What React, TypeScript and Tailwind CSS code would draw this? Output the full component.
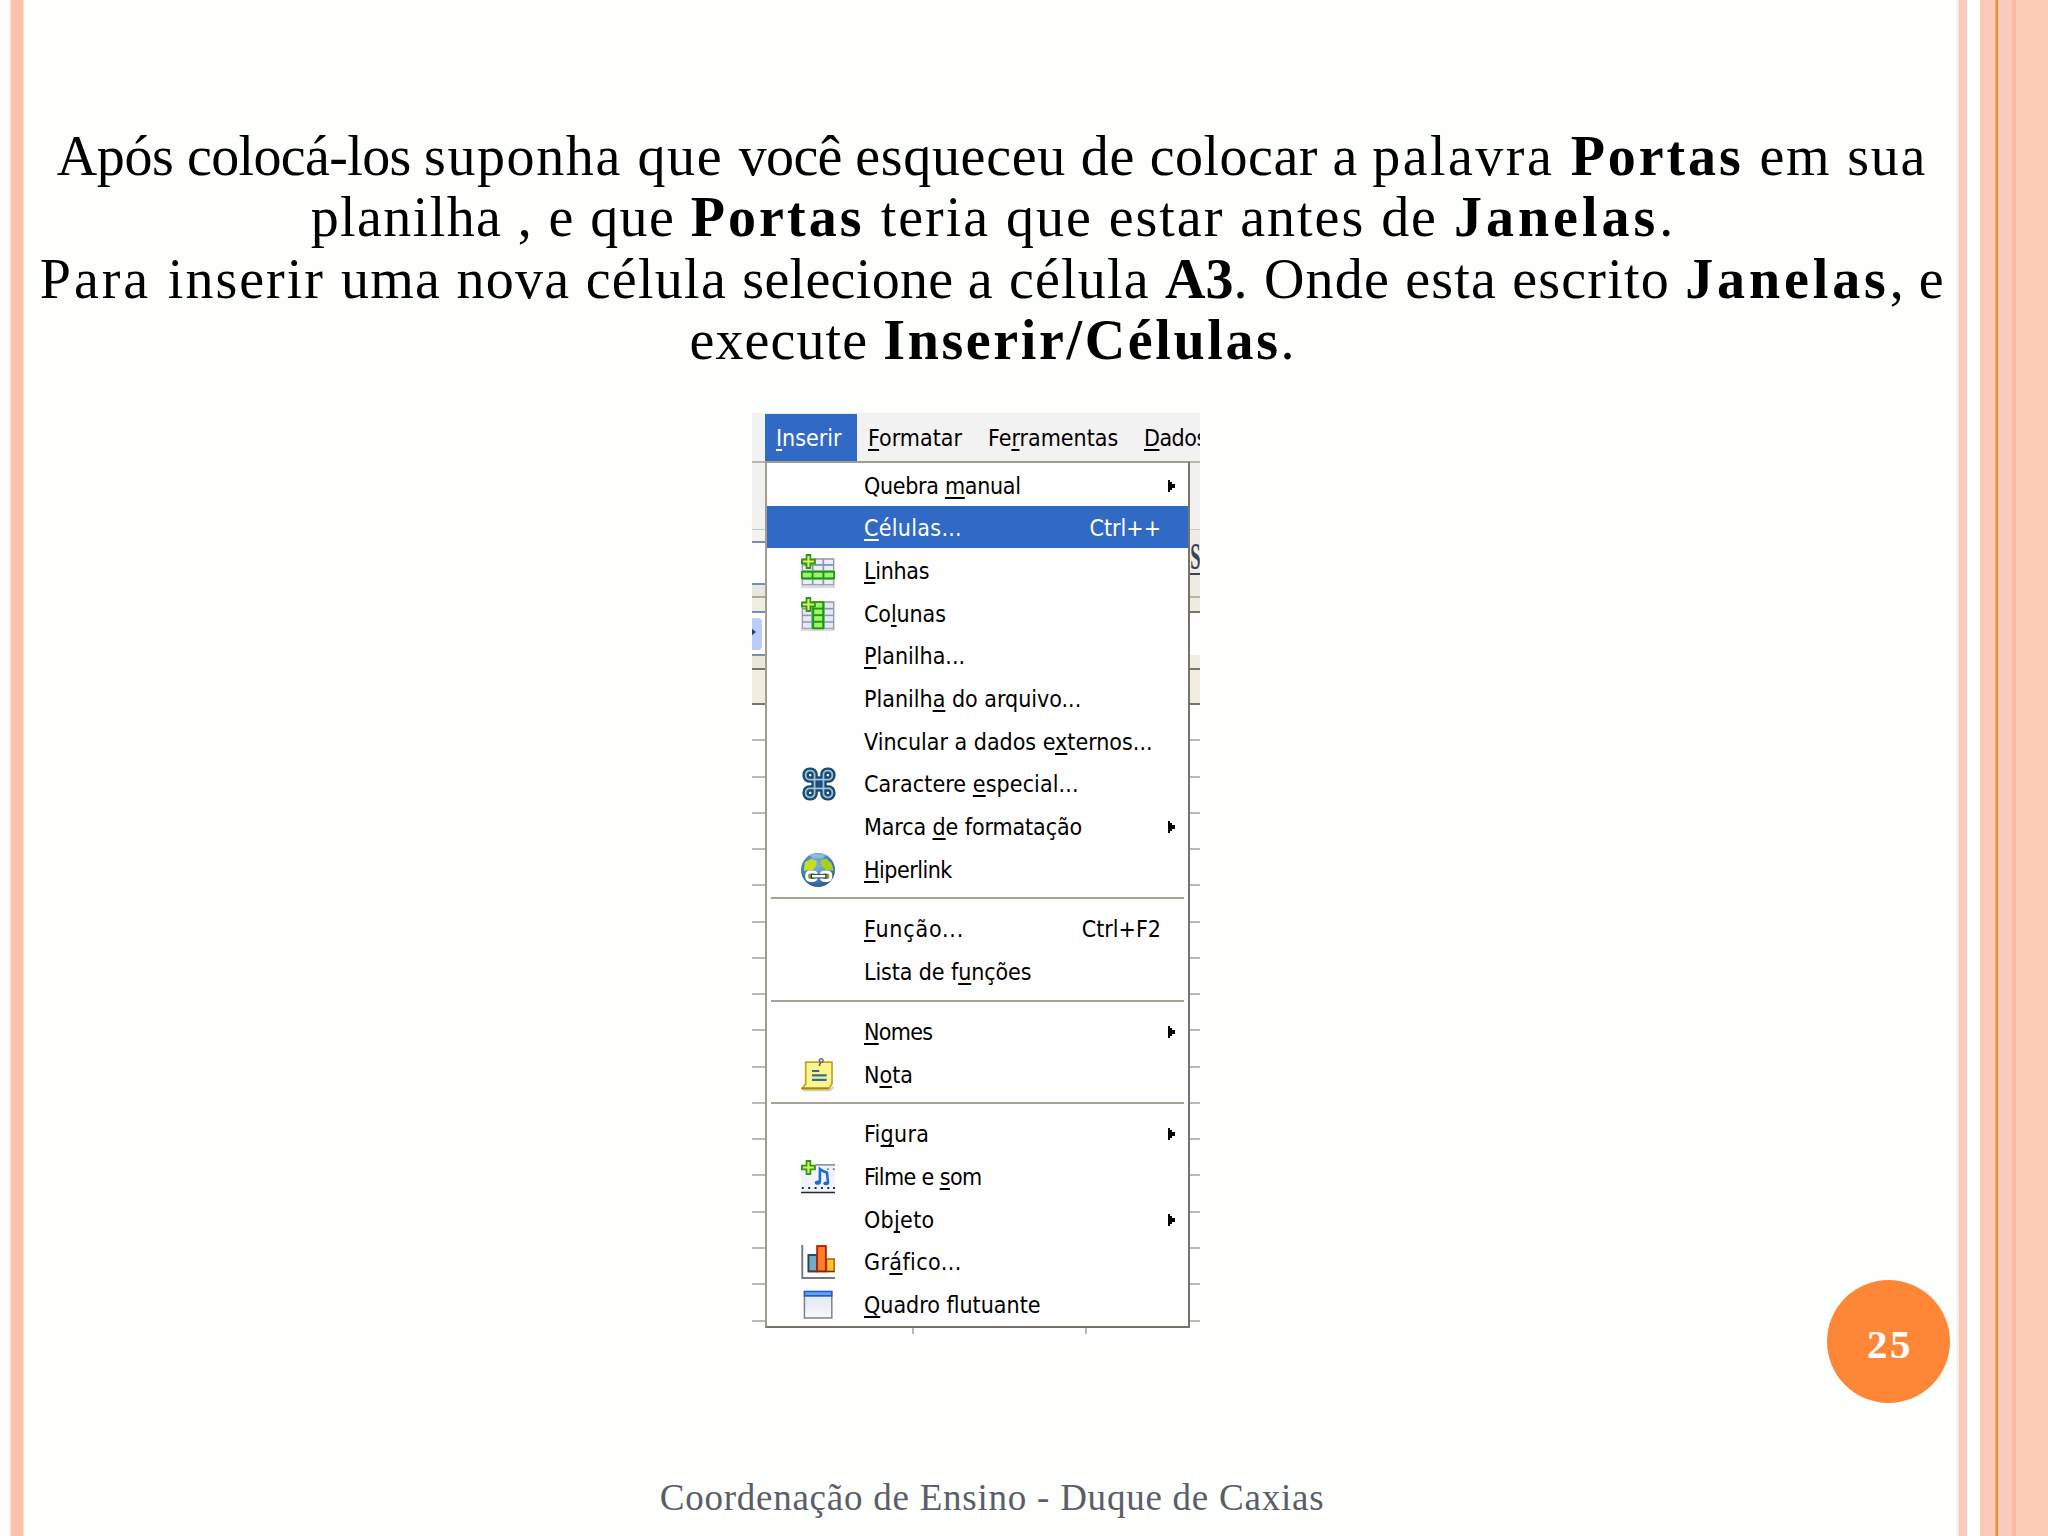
import { ReactNode } from "react";

// "&" marks the mnemonic letter of a label
function Label({ text }: { text: string }) {
  const at = text.indexOf("&");
  if (at < 0) return <>{text}</>;
  return (
    <>
      {text.slice(0, at)}
      <span className="underline decoration-2 underline-offset-[3px] [text-decoration-skip-ink:none]">
        {text[at + 1]}
      </span>
      {text.slice(at + 2)}
    </>
  );
}

function Icon({ children }: { children: ReactNode }) {
  return (
    <svg viewBox="0 0 16 16" className="block h-[34px] w-[34px]">
      {children}
    </svg>
  );
}

function GreenPlus() {
  return (
    <>
      <path
        d="M2.2 0h2.6v2.2H7v2.6H4.8V7H2.2V4.8H0V2.2h2.2z"
        fill="#2f9a10"
      />
      <path d="M3 .9h1v2.1h2.1v1H4v2.1H3V4H.9V3H3z" fill="#d6f06a" />
    </>
  );
}

function RowsIcon() {
  return (
    <Icon>
      <rect x="0" y="15" width="16" height="1" fill="#d9dbe0" />
      <rect x="0.3" y="2" width="15.4" height="12.8" fill="#8f96a8" />
      {[2.7, 5.6, 12.2].map((y) =>
        [0.9, 5.9, 10.9].map((x) => (
          <rect key={`${x}-${y}`} x={x} y={y} width="4.2" height="2" fill="#e9eefa" />
        ))
      )}
      <rect x="0" y="8" width="16" height="3.8" fill="#12a006" />
      {[0.8, 5.9, 11].map((x) => (
        <rect key={x} x={x} y="8.8" width="4.2" height="2.2" fill="#a5f06c" />
      ))}
      <GreenPlus />
    </Icon>
  );
}

function ColumnsIcon() {
  return (
    <Icon>
      <rect x="0" y="15" width="16" height="1" fill="#d9dbe0" />
      <rect x="0.3" y="2" width="15.4" height="13" fill="#8f96a8" />
      {[2.7, 5.9, 9, 12.1].map((y) =>
        [0.9, 11.2].map((x) => (
          <rect key={`${x}-${y}`} x={x} y={y} width="3.9" height="2.4" fill="#e3e9f6" />
        ))
      )}
      <rect x="5.3" y="2" width="5.6" height="13.2" fill="#12a006" />
      {[2.8, 5.9, 9, 12.1].map((y) => (
        <rect key={y} x="6.2" y={y} width="3.8" height="2.2" fill="#a5f06c" />
      ))}
      <GreenPlus />
    </Icon>
  );
}

function SpecialCharIcon() {
  const loops =
    "M9 9H5.5A2.5 2.5 0 0 1 3 6.5V5.5A2.5 2.5 0 0 1 5.5 3H6.5A2.5 2.5 0 0 1 9 5.5ZM15 9V5.5A2.5 2.5 0 0 1 17.5 3H18.5A2.5 2.5 0 0 1 21 5.5V6.5A2.5 2.5 0 0 1 18.5 9ZM9 15V18.5A2.5 2.5 0 0 1 6.5 21H5.5A2.5 2.5 0 0 1 3 18.5V17.5A2.5 2.5 0 0 1 5.5 15ZM15 15H18.5A2.5 2.5 0 0 1 21 17.5V18.5A2.5 2.5 0 0 1 18.5 21H17.5A2.5 2.5 0 0 1 15 18.5Z";
  return (
    <svg viewBox="0.5 0.5 23 23" className="ml-[1px] block h-[34px] w-[34px]" fill="none">
      <path d={loops} stroke="#1b4a70" strokeWidth="4.4" />
      <rect x="9" y="9" width="6" height="6" stroke="#1b4a70" strokeWidth="4.4" />
      <path d={loops} stroke="#9cc3dc" strokeWidth="1.2" />
      <rect x="9" y="9" width="6" height="6" stroke="#9cc3dc" strokeWidth="1.2" />
      <rect x="11" y="11" width="2" height="2" fill="#1b4a70" />
    </svg>
  );
}

function HyperlinkIcon() {
  return (
    <Icon>
      <defs>
        <radialGradient id="globe" cx="0.45" cy="0.35" r="0.65">
          <stop offset="0" stopColor="#7fb4e2" />
          <stop offset="0.7" stopColor="#3d7cb4" />
          <stop offset="1" stopColor="#2d5f90" />
        </radialGradient>
      </defs>
      <circle cx="8" cy="8" r="8" fill="url(#globe)" />
      <path d="M4 .9Q8 -.4 12 .9L10 2.6H5.6z" fill="#8db9e0" />
      <path d="M1.8 4.4 5 2.7l2.4 1-.5 3-1.6 1.3-4 .4z" fill="#c6de22" />
      <path d="M9.2 3.2 12 2.6l2.6 2.6.8 3.2-3.4-.4-2.6-1.6z" fill="#a8cc24" />
      <rect x="2.7" y="8.9" width="4.6" height="4" rx="1.6" fill="#7f9d2e" stroke="#fff" strokeWidth="1.4" />
      <rect x="9.4" y="8.9" width="4.6" height="4" rx="1.6" fill="#7f9d2e" stroke="#fff" strokeWidth="1.4" />
      <path d="M4.6 10.9h7.4" stroke="#27404f" strokeWidth="2.2" />
      <path d="M5.2 10.9h6.2" stroke="#fff" strokeWidth="1.2" />
    </Icon>
  );
}

function NoteIcon() {
  return (
    <Icon>
      <path d="M.8 15.2h12.8l1.6-1.6" stroke="#d6cfae" strokeWidth="1" fill="none" />
      <path
        d="M2.2 1.9h12.4v10.2l-1.5 2.2H.6l1.6-2z"
        fill="#fbf48f"
        stroke="#c9a21e"
        strokeWidth="0.8"
      />
      <path d="M.2 14.3h12.9" stroke="#a8860e" strokeWidth="0.9" />
      <path d="M5.2 6.1h3.4M5.2 8.2h6.9M5.2 10.3h6.9" stroke="#2f6f94" strokeWidth="1" />
      <circle cx="9.5" cy="1.2" r="0.9" fill="#d5dade" stroke="#5c656c" strokeWidth="0.6" />
      <path d="M9.1 2.2 8.6 3.8" stroke="#4c555c" strokeWidth="0.7" />
    </Icon>
  );
}

function MovieIcon() {
  return (
    <Icon>
      <rect x="0" y="2" width="16" height="13" fill="#f0f3fb" />
      <path d="M7 2.3h9" stroke="#7e8490" strokeWidth="0.7" />
      <path d="M12.3 4.3h.8M15 4.3h.8" stroke="#6d7380" strokeWidth="0.8" />
      <path
        d="M.4 13.2h.9M3.4 13.2h.9M6.4 13.2h.9M9.4 13.2h.9M12.4 13.2h.9M15.1 13.2h.9"
        stroke="#222838"
        strokeWidth="0.9"
      />
      <path d="M0 15.3h16" stroke="#23293a" strokeWidth="0.8" />
      <path d="M8.9 10.6V4.2l1.4 1 1.9.7.6 5.2" fill="none" stroke="#1c6bd0" strokeWidth="1.2" />
      <ellipse cx="7.9" cy="10.7" rx="1.4" ry="1" fill="#1c6bd0" />
      <ellipse cx="11.8" cy="11" rx="1.3" ry="0.9" fill="#1c6bd0" />
      <GreenPlus />
    </Icon>
  );
}

function ChartIcon() {
  return (
    <Icon>
      <path d="M.6 0v15.5H16" fill="none" stroke="#75797f" strokeWidth="0.9" />
      <rect x="3.5" y="4.7" width="4" height="7.7" fill="#78aac4" stroke="#1c4866" strokeWidth="0.9" />
      <rect x="12" y="6.6" width="3.6" height="5.8" fill="#fbc32c" stroke="#b86f0c" strokeWidth="0.8" />
      <rect x="7.6" y="0.5" width="4.1" height="11.9" fill="#f8802a" stroke="#b32408" strokeWidth="0.9" />
      <path d="M3.2 12.5h12.6" stroke="#7a2a10" strokeWidth="0.6" />
    </Icon>
  );
}

function FrameIcon() {
  return (
    <Icon>
      <defs>
        <linearGradient id="pane" x1="0" y1="0" x2="0" y2="1">
          <stop offset="0" stopColor="#dde5f0" />
          <stop offset="1" stopColor="#f7f8fa" />
        </linearGradient>
      </defs>
      <rect x="1.6" y="1.7" width="12.9" height="12.4" fill="url(#pane)" stroke="#7c828c" strokeWidth="0.7" />
      <rect x="1.3" y="1.3" width="13.5" height="2.8" fill="#1e5fc4" />
      <rect x="2" y="2" width="12.1" height="1.3" fill="#5ea2fa" />
    </Icon>
  );
}

type Item = {
  label: string;
  tracking?: string;
  icon?: ReactNode;
  shortcut?: string;
  submenu?: boolean;
  active?: boolean;
};

const groups: Item[][] = [
  [
    { label: "Quebra &manual", tracking: "tracking-[-0.3px]", submenu: true },
    { label: "&Células...", tracking: "tracking-[0.3px]", shortcut: "Ctrl++", active: true },
    { label: "&Linhas", tracking: "tracking-[-0.3px]", icon: <RowsIcon /> },
    { label: "Co&lunas", tracking: "tracking-[-0.1px]", icon: <ColumnsIcon /> },
    { label: "&Planilha..." },
    { label: "Planilh&a do arquivo..." },
    { label: "Vincular a dados e&xternos..." },
    { label: "Caractere &especial...", tracking: "tracking-[0.1px]", icon: <SpecialCharIcon /> },
    { label: "Marca &de formatação", tracking: "tracking-[-0.1px]", submenu: true },
    { label: "&Hiperlink", tracking: "tracking-[-0.5px]", icon: <HyperlinkIcon /> },
  ],
  [
    { label: "&Função...", tracking: "tracking-[0.8px]", shortcut: "Ctrl+F2" },
    { label: "Lista de f&unções", tracking: "tracking-[-0.1px]" },
  ],
  [
    { label: "&Nomes", tracking: "tracking-[-0.7px]", submenu: true },
    { label: "N&ota", icon: <NoteIcon /> },
  ],
  [
    { label: "Fi&gura", tracking: "tracking-[0.3px]", submenu: true },
    { label: "Filme e &som", tracking: "tracking-[-0.6px]", icon: <MovieIcon /> },
    { label: "Ob&jeto", tracking: "tracking-[0.3px]", submenu: true },
    { label: "Gr&áfico...", tracking: "tracking-[0.4px]", icon: <ChartIcon /> },
    { label: "&Quadro flutuante", icon: <FrameIcon /> },
  ],
];

function MenuItem({ item }: { item: Item }) {
  return (
    <div
      className={
        item.active
          ? "flex h-[42.67px] items-center bg-[#316ac5] pt-[3px] text-white"
          : "flex h-[42.67px] items-center pt-[3px] text-black"
      }
    >
      <div className="w-[97px] shrink-0 pl-[34px]">{item.icon}</div>
      <div className="flex-1 whitespace-nowrap">
        <span className={item.tracking}>
          <Label text={item.label} />
        </span>
      </div>
      {item.shortcut && <div className="pr-[27px]">{item.shortcut}</div>}
      {item.submenu && (
        <svg viewBox="0 0 7 12" className="mr-[13px] h-[12px] w-[7px]">
          <path d="M0 0h2v2h2v2h3v4H4v2H2v2H0z" fill="black" />
        </svg>
      )}
    </div>
  );
}

// pieces of the application window left visible beside the open menu
const leftBands = [
  "h-[66px] bg-[#f1f2f0]",
  "h-[1px] bg-[#c9c9c4]",
  "h-[11px] bg-[#f3f3ef]",
  "h-[2px] bg-[#7590b8]",
  "h-[40px] bg-white",
  "h-[2px] bg-[#7590b8]",
  "h-[11px] bg-[#e8e7dd]",
  "h-[2px] bg-[#aeaa98]",
  "h-[13px] bg-[#efeee2]",
  "h-[2px] bg-[#7590b8]",
];

const rightBands = [
  "h-[66px] bg-[#f1f2f0]",
  "h-[1px] bg-[#c9c9c4]",
  "h-[66px] bg-[#edede6]",
  "h-[2px] bg-[#b9b6a6]",
  "h-[13px] bg-[#edecdf]",
  "h-[2px] bg-[#77746a]",
  "h-[42px] bg-white",
  "h-[13px] bg-[#efeee4]",
];

function GridLines() {
  return (
    <>
      <div className="h-[2px] bg-[#77746a]" />
      <div className="h-[33px] bg-[#f1eee0]" />
      <div className="h-[2px] bg-[#77746a]" />
      {Array.from({ length: 17 }, (_, i) => (
        <div key={i} className="h-[36.28px] border-b-2 border-[#b9b9b9]" />
      ))}
    </>
  );
}

function InsertMenu() {
  return (
    <div className="ml-[728px] flex h-[921px] w-[448px] flex-col overflow-hidden bg-white font-['DejaVu_Sans_Condensed','DejaVu_Sans',sans-serif] text-[23px] leading-[30px]">
      <div className="flex h-[48px] shrink-0 items-center bg-[#f2f2f2] pl-[13px] whitespace-nowrap">
        <div className="mt-px flex h-[47px] w-[92px] shrink-0 items-center bg-[#316ac5] pt-[1px] pl-[11px] text-white">
          <Label text="&Inserir" />
        </div>
        <div className="w-[120px] shrink-0 pt-[2px] pl-[11px]">
          <Label text="&Formatar" />
        </div>
        <div className="w-[157px] shrink-0 pt-[2px] pl-[11px]">
          <Label text="Fe&rramentas" />
        </div>
        <div className="pt-[2px] pl-[10px] tracking-[-0.5px]">
          <Label text="&Dados" />
        </div>
      </div>
      <div className="flex h-[867px] shrink-0">
        <div className="w-[13px] border-t-2 border-[#bab6a8]">
          {leftBands.map((band, i) => (
            <div key={i} className={band} />
          ))}
          <div className="flex h-[41px] items-center bg-white">
            <div className="flex h-[32px] w-[10px] items-center rounded-r-[4px] bg-[#b9cdf8]">
              <svg viewBox="0 0 5 8" className="mb-[4px] h-[8px] w-[4px]">
                <path d="M0 0 5 4 0 8z" fill="#2c3d63" />
              </svg>
            </div>
          </div>
          <div className="h-[2px] bg-[#7590b8]" />
          <div className="h-[12px] bg-[#e8e7dd]" />
          <GridLines />
        </div>
        <div className="w-[425px] border-2 border-t-[#a09c8e] border-r-[#77736b] border-b-[#77736b] border-l-[#a09c8e] bg-[#fefefe]">
          {groups.map((group, i) => (
            <div key={i}>
              {i > 0 && (
                <div className="flex h-[17.1px] items-center px-[4px]">
                  <div className="h-[2px] flex-1 bg-[#a5a396]" />
                </div>
              )}
              {group.map((item) => (
                <MenuItem key={item.label} item={item} />
              ))}
            </div>
          ))}
        </div>
        <div className="relative w-[10px] border-t-2 border-[#bab6a8]">
          {rightBands.map((band, i) => (
            <div key={i} className={band} />
          ))}
          <GridLines />
          <div className="absolute top-[74px] left-0 flex h-[38px] w-[10px] justify-center border-b-2 border-[#3d3f58] font-['Liberation_Serif',serif] text-[37px] leading-[40px] font-bold text-[#3d3f58]">
            <span className="scale-x-50">S</span>
          </div>
        </div>
      </div>
      <div className="flex h-[6px] pl-[160px]">
        <div className="w-[173px] border-l-2 border-[#b9b9b9]" />
        <div className="border-l-2 border-[#b9b9b9]" />
      </div>
    </div>
  );
}

export default function App() {
  return (
    <div className="flex h-[1536px] w-[2048px] overflow-hidden bg-white font-['Liberation_Serif',serif]">
      <div className="w-[10px] bg-[#fefdfb]" />
      <div className="w-[14px] border-x border-[#fedccf] bg-[#fec2af]" />
      <main className="flex flex-1 flex-col bg-[#fdfffc] pt-[126px]">
        <div className="pl-[3px] text-center text-[56px] leading-[61.33px] whitespace-pre text-black">
          <div>
            <span className="tracking-[-0.4px]">{"Após "}</span>
            <span className="tracking-[-0.65px]">{"colocá-los "}</span>
            <span className="tracking-[1.6px]">{"suponha que "}</span>
            <span className="tracking-[-0.65px]">{"você "}</span>
            <span className="tracking-[0.7px]">{"esqueceu de "}</span>
            <span className="tracking-[0.5px]">{"colocar a "}</span>
            <span className="tracking-[2.45px]">{"palavra "}</span>
            <b className="tracking-[2.9px]">Portas</b>
            <span className="tracking-[1.8px]">{" em sua"}</span>
          </div>
          <div>
            <span className="tracking-[1.4px]">{"planilha , e que "}</span>
            <b className="tracking-[3.1px]">Portas</b>
            <span className="tracking-[1.97px]">{" teria que estar antes de "}</span>
            <b className="tracking-[4px]">Janelas</b>.
          </div>
          <div>
            <span className="tracking-[2.9px]">{"Para "}</span>
            <span className="tracking-[2px]">{"inserir "}</span>
            <span className="tracking-[1.28px]">{"uma nova célula "}</span>
            <span className="tracking-[0.3px]">{"selecione "}</span>
            <span className="tracking-[1.2px]">{"a célula "}</span>
            <b>A3</b>
            <span className="tracking-[1.2px]">{". Onde esta escrito "}</span>
            <b className="tracking-[3.9px]">Janelas</b>
            <span className="tracking-[0.5px]">, e</span>
          </div>
          <div>
            <span className="tracking-[1.1px]">{"execute "}</span>
            <b className="tracking-[2.64px]">Inserir/Células</b>.
          </div>
        </div>
        <div className="mt-[41.7px] flex h-[990px] shrink-0 items-start">
          <InsertMenu />
          <div className="mr-[7px] ml-auto flex size-[123px] items-center justify-center self-end rounded-full bg-[#fe8637] pt-[7px] pl-[3px] text-[41px] font-bold tracking-[2.5px] text-white">
            25
          </div>
        </div>
        <footer className="mt-[73px] pl-[3px] text-center text-[37px] leading-[44px] tracking-[0.76px] text-[#5b5d68]">
          Coordenação de Ensino - Duque de Caxias
        </footer>
      </main>
      <div className="w-[10px] border-l-2 border-[#fdebe4] bg-[#fccab9]" />
      <div className="w-[13px] bg-white" />
      <div className="w-[15px] bg-[#fccab8]" />
      <div className="w-[3px] border-l border-[#f3aa7a] bg-[#f9883c]" />
      <div className="w-[14px] bg-[#fccab8]" />
      <div className="w-[4px] bg-[#fabba5]" />
      <div className="w-[32px] bg-[#fdccb6]" />
    </div>
  );
}
